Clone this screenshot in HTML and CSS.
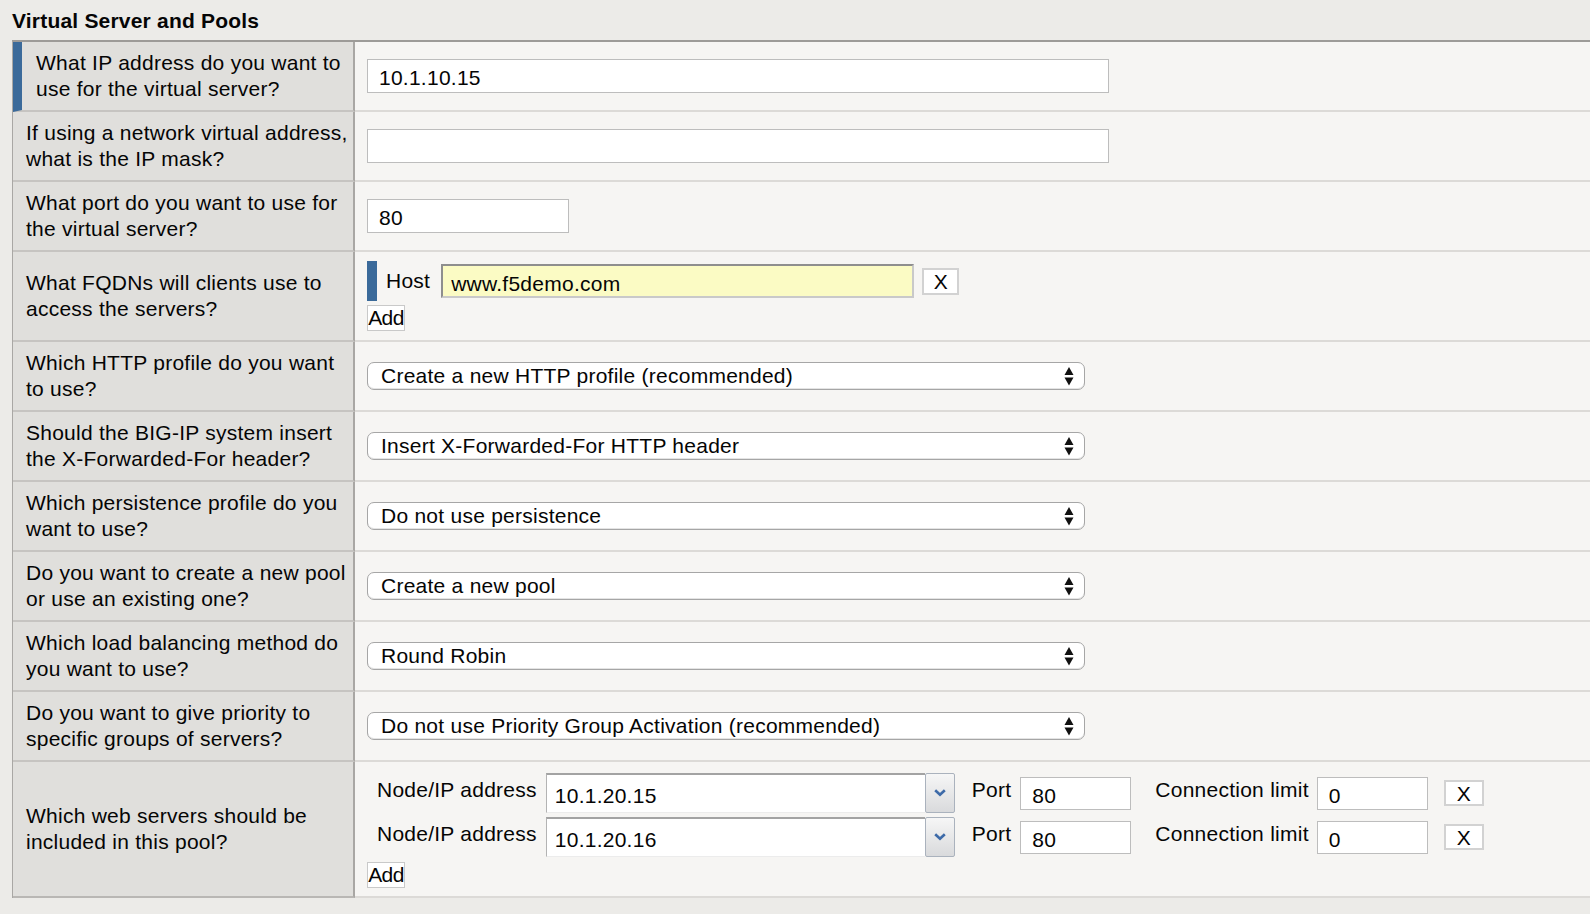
FILE: index.html
```html
<!DOCTYPE html>
<html lang="en">
<head>
<meta charset="utf-8">
<title>Virtual Server and Pools</title>
<link rel="stylesheet" href="styles.css">
</head>
<body>
<h2 class="section-title">Virtual Server and Pools</h2>
<div class="form-table">
  <div class="row">
    <div class="label label-active">What IP address do you want to use for the virtual server?</div>
    <div class="value"><input class="text-input wide" type="text" value="10.1.10.15"></div>
  </div>
  <div class="row">
    <div class="label">If using a network virtual address, what is the IP mask?</div>
    <div class="value"><input class="text-input wide" type="text" value=""></div>
  </div>
  <div class="row">
    <div class="label">What port do you want to use for the virtual server?</div>
    <div class="value"><input class="text-input port-wide" type="text" value="80"></div>
  </div>
  <div class="row row-fqdn">
    <div class="label">What FQDNs will clients use to access the servers?</div>
    <div class="value value-stack">
      <div class="host-line">
        <span class="host-bar"></span>
        <span class="field-label host-label">Host</span>
        <input class="host-input" type="text" value="www.f5demo.com">
        <button class="btn btn-x" type="button">X</button>
      </div>
      <button class="btn btn-add" type="button">Add</button>
    </div>
  </div>
  <div class="row">
    <div class="label">Which HTTP profile do you want to use?</div>
    <div class="value"><div class="select"><span>Create a new HTTP profile (recommended)</span><svg class="updown" width="10" height="19" viewBox="0 0 10 19"><path d="M5 0 L9.5 8 L0.5 8 Z M0.5 10.5 L9.5 10.5 L5 18.5 Z" fill="#111"/></svg></div></div>
  </div>
  <div class="row">
    <div class="label">Should the BIG-IP system insert the X-Forwarded-For header?</div>
    <div class="value"><div class="select"><span>Insert X-Forwarded-For HTTP header</span><svg class="updown" width="10" height="19" viewBox="0 0 10 19"><path d="M5 0 L9.5 8 L0.5 8 Z M0.5 10.5 L9.5 10.5 L5 18.5 Z" fill="#111"/></svg></div></div>
  </div>
  <div class="row">
    <div class="label">Which persistence profile do you want to use?</div>
    <div class="value"><div class="select"><span>Do not use persistence</span><svg class="updown" width="10" height="19" viewBox="0 0 10 19"><path d="M5 0 L9.5 8 L0.5 8 Z M0.5 10.5 L9.5 10.5 L5 18.5 Z" fill="#111"/></svg></div></div>
  </div>
  <div class="row">
    <div class="label">Do you want to create a new pool or use an existing one?</div>
    <div class="value"><div class="select"><span>Create a new pool</span><svg class="updown" width="10" height="19" viewBox="0 0 10 19"><path d="M5 0 L9.5 8 L0.5 8 Z M0.5 10.5 L9.5 10.5 L5 18.5 Z" fill="#111"/></svg></div></div>
  </div>
  <div class="row">
    <div class="label">Which load balancing method do you want to use?</div>
    <div class="value"><div class="select"><span>Round Robin</span><svg class="updown" width="10" height="19" viewBox="0 0 10 19"><path d="M5 0 L9.5 8 L0.5 8 Z M0.5 10.5 L9.5 10.5 L5 18.5 Z" fill="#111"/></svg></div></div>
  </div>
  <div class="row">
    <div class="label">Do you want to give priority to specific groups of servers?</div>
    <div class="value"><div class="select"><span>Do not use Priority Group Activation (recommended)</span><svg class="updown" width="10" height="19" viewBox="0 0 10 19"><path d="M5 0 L9.5 8 L0.5 8 Z M0.5 10.5 L9.5 10.5 L5 18.5 Z" fill="#111"/></svg></div></div>
  </div>
  <div class="row row-servers">
    <div class="label label-last">Which web servers should be included in this pool?</div>
    <div class="value value-stack value-servers">
      <div class="server">
        <span class="field-label node-label">Node/IP address</span>
        <div class="combo"><input class="combo-input" type="text" value="10.1.20.15"><span class="combo-btn"><svg width="12" height="8" viewBox="0 0 12 8"><path d="M1.2 1.2 L6 5.8 L10.8 1.2" fill="none" stroke="#3d6aa8" stroke-width="2.6"/></svg></span></div>
        <span class="field-label port-label">Port</span>
        <input class="text-input small-input" type="text" value="80">
        <span class="field-label conn-label">Connection limit</span>
        <input class="text-input small-input" type="text" value="0">
        <button class="btn btn-x btn-x-server" type="button">X</button>
      </div>
      <div class="server">
        <span class="field-label node-label">Node/IP address</span>
        <div class="combo"><input class="combo-input" type="text" value="10.1.20.16"><span class="combo-btn"><svg width="12" height="8" viewBox="0 0 12 8"><path d="M1.2 1.2 L6 5.8 L10.8 1.2" fill="none" stroke="#3d6aa8" stroke-width="2.6"/></svg></span></div>
        <span class="field-label port-label">Port</span>
        <input class="text-input small-input" type="text" value="80">
        <span class="field-label conn-label">Connection limit</span>
        <input class="text-input small-input" type="text" value="0">
        <button class="btn btn-x btn-x-server" type="button">X</button>
      </div>
      <button class="btn btn-add btn-add-server" type="button">Add</button>
    </div>
  </div>
</div>
</body>
</html>
```
FILE: styles.css
```css
* { box-sizing: border-box; }
html, body { margin: 0; padding: 0; }
body {
  background: #ecebe8;
  font-family: "Liberation Sans", Arial, sans-serif;
  font-size: 21px;
  letter-spacing: 0.25px;
  color: #050505;
  width: 1590px;
  height: 914px;
  overflow: hidden;
}
.section-title {
  margin: 0;
  height: 40px;
  padding: 2px 0 0 12px;
  font-size: 21px;
  font-weight: bold;
  line-height: 38px;
  letter-spacing: 0.2px;
  color: #050505;
}
.form-table {
  margin-left: 12px;
  border-top: 2px solid #9d9b98;
  border-left: 1px solid #a9a7a4;
}
.row { display: flex; height: 70px; }
.row-fqdn { height: 90px; }
.row-servers { height: 136px; }
.label {
  flex: 0 0 342px;
  background: #e0dfdc;
  border-right: 2px solid #a9a7a4;
  border-bottom: 2px solid #c6c4c1;
  padding: 0 3px 0 13px;
  display: flex;
  align-items: center;
  line-height: 26px;
}
.label-active {
  border-left: 9px solid #3b6a9a;
  padding-left: 14px;
}
.label-last { border-bottom-color: #b9b7b4; }
.value {
  flex: 1;
  background: #f6f5f3;
  border-bottom: 2px solid #dcdad7;
  padding: 0 12px;
  display: flex;
  align-items: center;
}
.value-stack {
  flex-direction: column;
  align-items: flex-start;
  justify-content: flex-start;
  padding-top: 9px;
}
.value-servers { padding-top: 11px; }
.text-input {
  font: inherit;
  letter-spacing: 0.25px;
  color: #050505;
  height: 34px;
  background: #fff;
  border: 1px solid #bdbdbd;
  padding: 4px 11px 0;
  margin: 0;
  outline: none;
}
.wide { width: 742px; }
.port-wide { width: 202px; }
.field-label { white-space: nowrap; }
.host-line { display: flex; align-items: center; height: 40px; }
.host-bar { width: 10px; height: 40px; background: #3b6a9a; }
.host-label { margin-left: 9px; margin-right: 11px; }
.host-input {
  font: inherit;
  letter-spacing: 0.25px;
  color: #050505;
  width: 473px;
  height: 34px;
  margin: 0;
  padding: 6px 8px 0;
  background: #fbfbc4;
  border-style: solid;
  border-width: 2px;
  border-color: #8e8e8e #c9c9c9 #c9c9c9 #8e8e8e;
  outline: none;
}
.btn {
  font: inherit;
  color: #050505;
  background: #fff;
  margin: 0;
  cursor: pointer;
}
.btn-x {
  width: 37px;
  height: 27px;
  margin-left: 8px;
  border: 2px solid #d2d2d2;
  padding: 0;
  line-height: 23px;
}
.btn-add {
  height: 26px;
  width: 38px;
  padding: 0;
  margin-top: 4px;
  border: 1px solid #c9c9c9;
  line-height: 24px;
  letter-spacing: -0.6px;
}
.btn-add-server { margin-top: 1px; }
.select {
  width: 718px;
  height: 28px;
  background: #fff;
  border: 1px solid #a6a6a6;
  border-radius: 7px;
  display: flex;
  align-items: center;
  justify-content: space-between;
  padding: 0 10px 0 13px;
  box-shadow: inset 0 -1px 0 #e4e4e4;
}
.updown { display: block; }
.server { display: flex; align-items: center; height: 40px; margin-bottom: 4px; }
.node-label { margin-left: 10px; margin-right: 9px; position: relative; top: -3px; }
.combo { display: flex; width: 409px; height: 40px; }
.combo-input {
  font: inherit;
  letter-spacing: 0.25px;
  color: #050505;
  flex: 1;
  min-width: 0;
  height: 40px;
  margin: 0;
  padding: 5px 8px 0;
  background: #fff;
  border-style: solid;
  border-width: 2px 0 1px 1px;
  border-color: #a3a3a3 transparent #ececec #b3b3b3;
  outline: none;
}
.combo-btn {
  width: 30px;
  height: 40px;
  display: flex;
  align-items: center;
  justify-content: center;
  background: linear-gradient(#f6f6f6, #d9dadc);
  border: 1px solid #aab2bd;
  border-radius: 2px;
}
.port-label { margin-left: 17px; margin-right: 9px; position: relative; top: -3px; }
.conn-label { margin-left: 24px; margin-right: 8px; position: relative; top: -3px; }
.small-input { width: 111px; height: 33px; padding-top: 5px; }
.btn-x-server { width: 40px; height: 26px; margin-left: 16px; }
```
